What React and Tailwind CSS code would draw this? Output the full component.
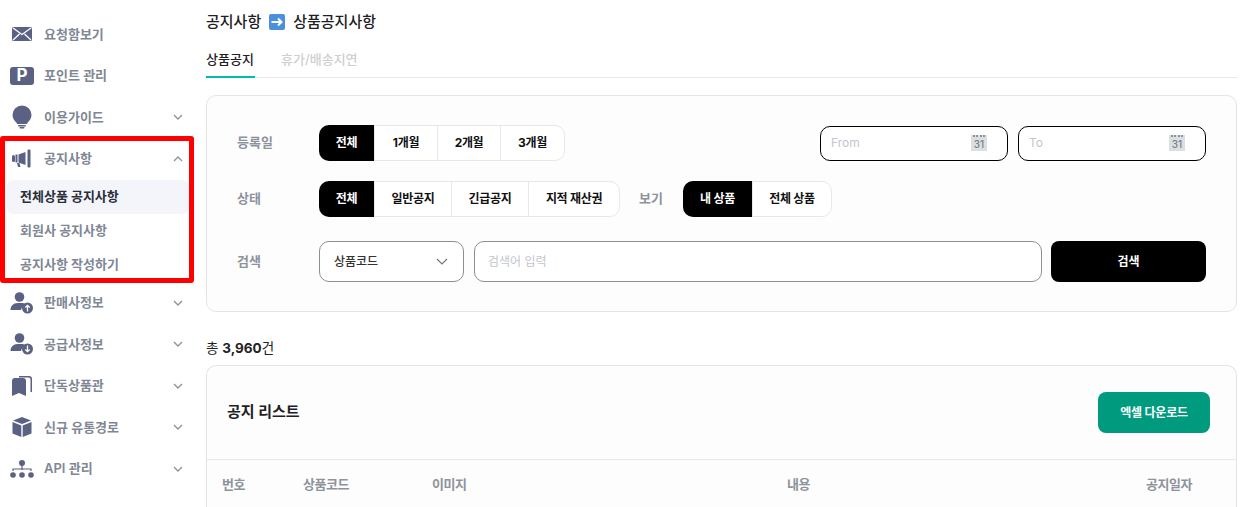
const FONT = "font-['Inter','Noto_Sans_CJK_KR',sans-serif]";

function Chevron({ up }) {
  return (
    <svg width="12" height="8" viewBox="0 0 12 8" fill="none" stroke="#8d939f" strokeWidth="1.4" className="mr-[10px]">
      <path d={up ? "M2 6l4-4 4 4" : "M2 2l4 4 4-4"} />
    </svg>
  );
}

const ink = "#5a6183";

function Envelope() {
  return (
    <svg width="22" height="16" viewBox="0 0 22 16">
      <rect x="1" y="1" width="20" height="14" rx="1.5" fill={ink} />
      <path d="M2 2l9 6.5L20 2M2 14l6.5-6M20 14l-6.5-6" fill="none" stroke="#fff" strokeWidth="1.3" />
    </svg>
  );
}

function Bulb() {
  return (
    <svg width="20" height="24" viewBox="0 0 20 24">
      <path d="M10 0.500a9.500 9.500 0 0 0-9.500 9.500c0 3.500 2 5.500 3.600 7.300.6.8.9 1.400 1 1.700h9.800c.1-.3.4-.9 1-1.700 1.600-1.800 3.600-3.800 3.600-7.300A9.500 9.500 0 0 0 10 .500z" fill={ink} />
      <rect x="6" y="20" width="8" height="1.600" rx=".8" fill={ink} />
      <rect x="7.500" y="22" width="5" height="1.600" rx=".8" fill={ink} />
    </svg>
  );
}

function Megaphone() {
  return (
    <svg width="20" height="20" viewBox="0 0 20 20">
      <rect x="0" y="6" width="3" height="7" rx="1.500" fill={ink} />
      <rect x="3.500" y="5.500" width="2" height="8" fill={ink} />
      <path d="M6.500 5.500L13.500 3v13l-7-2.500z" fill={ink} />
      <path d="M5 14h2.500l1 4H6z" fill={ink} />
      <rect x="15.500" y="0.500" width="3" height="18" rx="1" fill={ink} />
    </svg>
  );
}

function Person({ down }) {
  return (
    <svg width="24" height="22" viewBox="0 0 24 22">
      <circle cx="9.500" cy="5" r="4.800" fill={ink} />
      <path d="M0.500 18c0-4 3-7 7-7h4c2 0 3.500.6 4.600 1.700A7 7 0 0 0 11 18z" fill={ink} />
      <circle cx="17.500" cy="16" r="5.500" fill={ink} />
      <path d={down ? "M17.500 12.500v6M15.300 16.500l2.200 2.200 2.200-2.200" : "M17.500 19.500v-6M15.300 15.500l2.200-2.200 2.200 2.200"} fill="none" stroke="#fff" strokeWidth="1.300" />
    </svg>
  );
}

function Bookmarks() {
  return (
    <svg width="21" height="20" viewBox="0 0 21 20">
      <path d="M0 5a3 3 0 0 1 3-3h8a3 3 0 0 1 3 3v15l-7-3-7 3z" fill={ink} />
      <path d="M7 0h10a3 3 0 0 1 3 3v13h-1.500V3.500A2 2 0 0 0 16.500 1.500H7z" fill={ink} />
    </svg>
  );
}

function Box() {
  return (
    <svg width="20" height="20" viewBox="0 0 20 20">
      <path d="M10 0l9 3.500L10 7 1 3.500z" fill={ink} />
      <path d="M0.500 5l8.800 3.400V20L0.500 16.500z" fill={ink} />
      <path d="M19.500 5l-8.800 3.400V20l8.800-3.500z" fill={ink} />
    </svg>
  );
}

function Tree() {
  return (
    <svg width="24" height="18" viewBox="0 0 24 18">
      <circle cx="12" cy="3" r="3" fill={ink} />
      <path d="M12 5v5M3 11V9h18v2" fill="none" stroke={ink} strokeWidth="1.200" />
      <circle cx="3" cy="15" r="2.800" fill={ink} />
      <circle cx="12" cy="15" r="2.800" fill={ink} />
      <circle cx="21" cy="15" r="2.800" fill={ink} />
    </svg>
  );
}

function PBadge() {
  return (
    <span className="flex h-[18px] w-[24px] items-center justify-center rounded-[3px] bg-[#5a6183] text-[17px] font-bold leading-none text-white">
      P
    </span>
  );
}

function NavRow({ icon, label, chevron, up }) {
  return (
    <div className="flex h-[41.6px] items-center pl-[10px] pr-[2px]">
      <span className="flex w-[24px] justify-center">{icon}</span>
      <span className="ml-[10px] flex-1 text-[13px] font-semibold text-[#7f8794]">{label}</span>
      {chevron && <Chevron up={up} />}
    </div>
  );
}

function Sidebar() {
  return (
    <aside className="w-[196px] shrink-0 pt-[13.5px]">
      <NavRow icon={<Envelope />} label="요청함보기" />
      <NavRow icon={<PBadge />} label="포인트 관리" />
      <NavRow icon={<Bulb />} label="이용가이드" chevron />
      <div className="relative">
        <NavRow icon={<Megaphone />} label="공지사항" chevron up />
        <div className="flex flex-col px-[7px]">
          <div className="flex h-[34px] items-center rounded-[6px] bg-[#f4f5fa] px-[13px] text-[13px] font-bold text-[#2b2f38]">전체상품 공지사항</div>
          <div className="flex h-[34px] items-center px-[13px] text-[13px] font-semibold text-[#7f8794]">회원사 공지사항</div>
          <div className="flex h-[34px] items-center px-[13px] text-[13px] font-semibold text-[#7f8794]">공지사항 작성하기</div>
        </div>
        <div className="pointer-events-none absolute inset-x-0 -top-[2px] -bottom-[1px] right-[2px] rounded-[3px] border-[5px] border-[#ff0000]" />
      </div>
      <NavRow icon={<Person />} label="판매사정보" chevron />
      <NavRow icon={<Person down />} label="공급사정보" chevron />
      <NavRow icon={<Bookmarks />} label="단독상품관" chevron />
      <NavRow icon={<Box />} label="신규 유통경로" chevron />
      <NavRow icon={<Tree />} label="API 관리" chevron />
    </aside>
  );
}

function Segments({ items, widths }) {
  return (
    <div className="flex h-[36px] rounded-[10px] border border-[#e8e8e8] bg-white">
      {items.map((item, i) => (
        <div
          key={item}
          style={{ width: widths[i] }}
          className={
            i === 0
              ? "flex -my-px -ml-px items-center justify-center rounded-l-[10px] bg-black text-[12px] font-bold tracking-[-0.3px] text-white"
              : "flex items-center justify-center border-l border-[#e8e8e8] text-[12px] font-bold tracking-[-0.3px] text-[#111]"
          }
        >
          {item}
        </div>
      ))}
    </div>
  );
}

function DateBox({ label }) {
  return (
    <div className="flex h-[35px] w-[188px] items-center justify-between rounded-[10px] border border-black bg-white pl-[10px] pr-[20px]">
      <span className="text-[12px] text-[#c2c6cc]">{label}</span>
      <span className="flex h-[16px] w-[16px] flex-col items-center bg-[#dcdfe2]">
        <span className="h-[3px] w-[12px] border-t-2 border-dotted border-[#8d939c]" />
        <span className="text-[10px] font-medium leading-[13px] text-[#777f88]">31</span>
      </span>
    </div>
  );
}

function Label({ children, className }) {
  return <span className={"text-[13px] font-semibold text-[#8d939c] " + (className || "")}>{children}</span>;
}

function App() {
  return (
    <div className={"flex h-[507px] overflow-hidden bg-white " + FONT}>
      <Sidebar />
      <main className="ml-[10px] w-[1031px] shrink-0">
        <h1 className="mt-[11px] flex h-[22px] items-center text-[15px] font-medium text-[#1e2024]">
          공지사항
          <span className="mx-[8px] flex h-[16px] w-[16px] items-center justify-center rounded-[2px] bg-[#4a90dc]">
            <svg width="12" height="10" viewBox="0 0 12 10" fill="none" stroke="#fff" strokeWidth="2">
              <path d="M0.500 5h9M7 1.500L10.500 5 7 8.500" />
            </svg>
          </span>
          상품공지사항
        </h1>
        <div className="mt-[11px] flex h-[34px] items-start border-b border-[#e8e8e8] text-[13px] font-medium">
          <div className="h-[34px] w-[49px] border-b-2 border-[#00bfa8] pt-[6px] text-[#1e2024]">상품공지</div>
          <div className="ml-[26px] pt-[6px] text-[#cfcfcf]">휴가/배송지연</div>
        </div>

        <section className="mt-[17px] h-[217px] rounded-[10px] border border-[#e5e5e5] bg-[#fdfdfd] pl-[30px] pr-[30px] pt-[29px]">
          <div className="flex items-center justify-between">
            <div className="flex items-center">
              <Label className="w-[82px]">등록일</Label>
              <Segments items={["전체", "1개월", "2개월", "3개월"]} widths={[55, 63, 63, 64]} />
            </div>
            <div className="flex gap-[10px]">
              <DateBox label="From" />
              <DateBox label="To" />
            </div>
          </div>
          <div className="mt-[20px] flex items-center">
            <Label className="w-[82px]">상태</Label>
            <Segments items={["전체", "일반공지", "긴급공지", "지적 재산권"]} widths={[55, 77, 77, 91]} />
            <Label className="ml-[19px] w-[44px]">보기</Label>
            <Segments items={["내 상품", "전체 상품"]} widths={[69, 79]} />
          </div>
          <div className="mt-[24px] flex items-center">
            <Label className="w-[82px]">검색</Label>
            <div className="flex h-[41px] w-[145px] items-center justify-between rounded-[10px] border border-[#8b9097] bg-white pl-[14px] pr-[15px] text-[12px] font-medium text-[#333]">
              상품코드
              <svg width="12" height="7" viewBox="0 0 12 7" fill="none" stroke="#777" strokeWidth="1.200">
                <path d="M1 1l5 5 5-5" />
              </svg>
            </div>
            <div className="ml-[10px] flex h-[41px] w-[568px] items-center rounded-[10px] border border-[#8b9097] bg-white pl-[13px] text-[12px] text-[#c2c6cc]">
              검색어 입력
            </div>
            <div className="ml-[9px] flex h-[41px] w-[155px] items-center justify-center rounded-[8px] bg-black text-[12px] font-bold text-white">
              검색
            </div>
          </div>
        </section>

        <p className="mt-[26px] h-[20px] text-[13.5px] leading-[20px] text-[#222]">
          총 <span className="font-bold">3,960</span>건
        </p>

        <section className="mt-[7px] rounded-t-[10px] border border-b-0 border-[#e5e5e5] bg-[#fdfdfd]">
          <div className="flex h-[94px] items-center justify-between border-b border-[#e8e8e8] pl-[20px] pr-[26px]">
            <h2 className="text-[15px] font-bold text-[#1e2024]">공지 리스트</h2>
            <div className="flex h-[41px] w-[112px] items-center justify-center rounded-[8px] bg-[#009b7e] text-[12px] font-bold tracking-[-0.2px] text-white">
              엑셀 다운로드
            </div>
          </div>
          <div className="flex h-[50px] items-center pl-[15px] text-[13px] font-semibold tracking-[-0.5px] text-[#8d939c]">
            <span className="w-[81px]">번호</span>
            <span className="w-[129px]">상품코드</span>
            <span className="w-[355px]">이미지</span>
            <span className="w-[359px]">내용</span>
            <span>공지일자</span>
          </div>
        </section>
      </main>
    </div>
  );
}

export default App;
